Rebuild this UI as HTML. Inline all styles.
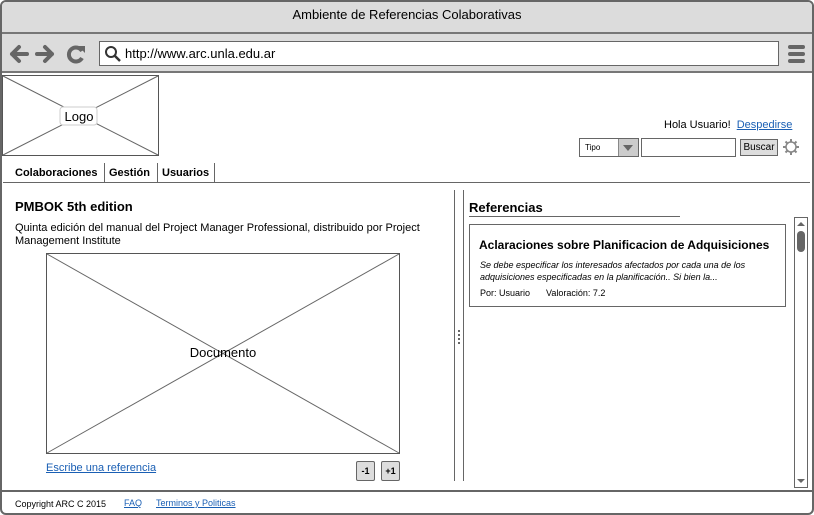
<!DOCTYPE html>
<html><head><meta charset="utf-8"><style>
*{box-sizing:border-box;margin:0;padding:0}
body{width:814px;height:515px;overflow:hidden;background:#fff;font-family:"Liberation Sans",sans-serif;color:#000;position:relative}
.a{position:absolute}
a,.lnk{color:#1a5fb4;text-decoration:underline}
</style></head><body>
<div class="a" style="left:0;top:0;width:814px;height:515px;border:2px solid #666;border-radius:6px;overflow:hidden">
 <div class="a" style="left:0;top:0;width:810px;height:71px;background:#dcdcdc"></div>
 <div class="a" style="left:0;top:30px;width:810px;height:2px;background:#777"></div>
 <div class="a" style="left:0;top:69px;width:810px;height:2px;background:#777"></div>
 <div class="a" style="left:0;top:5px;width:810px;text-align:center;font-size:13px">Ambiente de Referencias Colaborativas</div>
 <svg class="a" style="left:6px;top:40px" width="80" height="24" viewBox="0 0 80 24">
  <path d="M4 12 L11 5 M4 12 L11 19 M4 12 H19" stroke="#666" stroke-width="4" fill="none" stroke-linecap="round"/>
  <path d="M44 12 L37 5 M44 12 L37 19 M44 12 H29" stroke="#666" stroke-width="4" fill="none" stroke-linecap="round"/>
  <path d="M74 9 A7 7 0 1 0 74 16" stroke="#666" stroke-width="4" fill="none"/>
  <path d="M70 4 L77 4 L77 11 Z" fill="#666"/>
 </svg>
 <div class="a" style="left:97px;top:39px;width:680px;height:25px;background:#fff;border:1.5px solid #666"></div>
 <svg class="a" style="left:102px;top:43px" width="18" height="18"><circle cx="7" cy="7" r="5" stroke="#333" stroke-width="2" fill="none"/><path d="M11 11 L16 16" stroke="#333" stroke-width="2.5"/></svg>
 <div class="a" style="left:123px;top:44px;font-size:13px">http://www.arc.unla.edu.ar</div>
 <div class="a" style="left:786px;top:43px;width:17px;height:4px;background:#666;border-radius:2px"></div>
 <div class="a" style="left:786px;top:50px;width:17px;height:4px;background:#666;border-radius:2px"></div>
 <div class="a" style="left:786px;top:57px;width:17px;height:4px;background:#666;border-radius:2px"></div>
 <!-- logo -->
 <svg class="a" style="left:0;top:73px" width="158" height="82"><rect x="0.5" y="0.5" width="156" height="80" fill="#fff" stroke="#555"/><path d="M1 1 L156 80 M156 1 L1 80" stroke="#666"/><rect x="58" y="32" width="37" height="18" rx="3" fill="#fff" stroke="#ccc"/><text x="77" y="46" font-size="13" text-anchor="middle" font-family="Liberation Sans">Logo</text></svg>
 <div class="a" style="left:662px;top:117px;font-size:11px">Hola Usuario! <span class="lnk" style="margin-left:3px">Despedirse</span></div>
 <div class="a" style="left:577px;top:136px;width:60px;height:19px;border:1px solid #666;background:#fff;font-size:8px;padding:4px 0 0 5px">Tipo</div>
 <div class="a" style="left:616px;top:137px;width:20px;height:17px;background:#ccc;border-left:1px solid #888"></div>
 <div class="a" style="left:621px;top:143px;border:5px solid transparent;border-top:6px solid #666"></div>
 <div class="a" style="left:639px;top:136px;width:95px;height:19px;border:1px solid #666;background:#fff"></div>
 <div class="a" style="left:738px;top:137px;width:38px;height:17px;border:1px solid #666;background:#ddd;font-size:10px;text-align:center;padding-top:2px">Buscar</div>
 <svg class="a" style="left:780px;top:136px" width="18" height="18"><circle cx="9" cy="9" r="5" fill="#fff" stroke="#888" stroke-width="1.5"/><path d="M9 1V4M9 14V17M1 9H4M14 9H17M3.5 3.5L5.5 5.5M12.5 12.5L14.5 14.5M3.5 14.5L5.5 12.5M12.5 5.5L14.5 3.5" stroke="#888" stroke-width="2"/></svg>
 <!-- tabs -->
 <div class="a" style="left:13px;top:165px;font-size:11px;font-weight:bold">Colaboraciones</div>
 <div class="a" style="left:102px;top:161px;width:1px;height:20px;background:#666"></div>
 <div class="a" style="left:107px;top:165px;font-size:11px;font-weight:bold">Gestión</div>
 <div class="a" style="left:155px;top:161px;width:1px;height:20px;background:#666"></div>
 <div class="a" style="left:160px;top:165px;font-size:11px;font-weight:bold">Usuarios</div>
 <div class="a" style="left:212px;top:161px;width:1px;height:20px;background:#666"></div>
 <div class="a" style="left:1px;top:180px;width:807px;height:1px;background:#666"></div>
 <!-- left content -->
 <div class="a" style="left:13px;top:197px;font-size:13px;font-weight:bold">PMBOK 5th edition</div>
 <div class="a" style="left:13px;top:220px;width:420px;font-size:11px;line-height:13px">Quinta edición del manual del Project Manager Professional, distribuido por Project Management Institute</div>
 <svg class="a" style="left:44px;top:251px" width="355" height="202"><rect x="0.5" y="0.5" width="353" height="200" fill="#fff" stroke="#555"/><path d="M1 1 L353 200 M353 1 L1 200" stroke="#666"/><text x="177" y="104" font-size="13" text-anchor="middle" font-family="Liberation Sans">Documento</text></svg>
 <div class="a lnk" style="left:44px;top:460px;font-size:11px">Escribe una referencia</div>
 <div class="a" style="left:354px;top:459px;width:19px;height:20px;border:1px solid #666;background:#ddd;border-radius:2px;font-size:9px;font-weight:bold;text-align:center;padding-top:4px">-1</div>
 <div class="a" style="left:379px;top:459px;width:19px;height:20px;border:1px solid #666;background:#ddd;border-radius:2px;font-size:9px;font-weight:bold;text-align:center;padding-top:4px">+1</div>
 <!-- divider -->
 <div class="a" style="left:452px;top:188px;width:1px;height:291px;background:#666"></div>
 <div class="a" style="left:461px;top:188px;width:1px;height:291px;background:#666"></div>
 <div class="a" style="left:456px;top:328px;width:2px;height:14px;border-left:2px dotted #666"></div>
 <!-- right -->
 <div class="a" style="left:467px;top:198px;font-size:13px;font-weight:bold">Referencias</div>
 <div class="a" style="left:467px;top:214px;width:211px;height:1px;background:#666"></div>
 <div class="a" style="left:467px;top:222px;width:317px;height:83px;border:1px solid #666"></div>
 <div class="a" style="left:477px;top:236px;font-size:12px;font-weight:bold">Aclaraciones sobre Planificacion de Adquisiciones</div>
 <div class="a" style="left:478px;top:257px;font-size:9px;font-style:italic;line-height:12px;width:300px">Se debe especificar los interesados afectados por cada una de los adquisiciones especificadas en la planificación.. Si bien la...</div>
 <div class="a" style="left:478px;top:286px;font-size:9px">Por: Usuario<span style="margin-left:16px">Valoración: 7.2</span></div>
 <div class="a" style="left:792px;top:215px;width:14px;height:271px;border:1px solid #666;background:#fff"></div>
 <div class="a" style="left:795px;top:220px;border:4px solid transparent;border-bottom:4px solid #666;border-top:0"></div>
 <div class="a" style="left:795px;top:477px;border:4px solid transparent;border-top:4px solid #666;border-bottom:0"></div>
 <div class="a" style="left:795px;top:229px;width:8px;height:21px;background:#666;border-radius:4px"></div>
 <!-- footer -->
 <div class="a" style="left:0;top:488px;width:810px;height:1.5px;background:#666"></div>
 <div class="a" style="left:13px;top:497px;font-size:9px">Copyright ARC C 2015</div>
 <div class="a lnk" style="left:122px;top:496px;font-size:9px">FAQ</div>
 <div class="a lnk" style="left:154px;top:496px;font-size:9px">Terminos y Politicas </div>
</div>
</body></html>
